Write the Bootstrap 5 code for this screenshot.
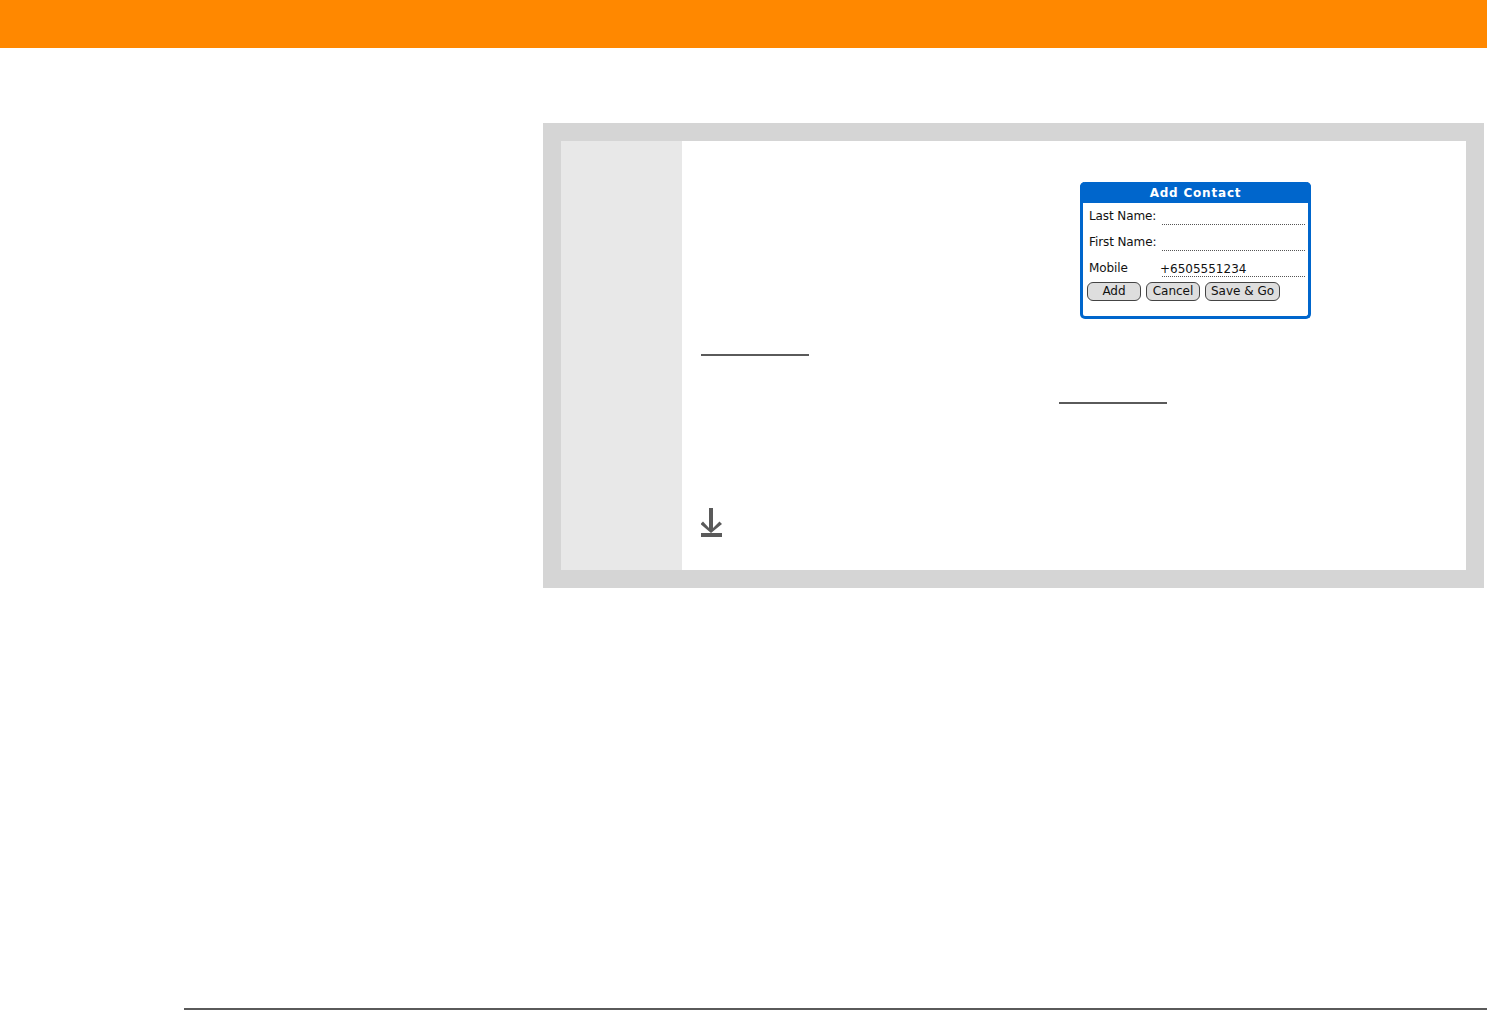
<!DOCTYPE html>
<html lang="en">
<head>
  <meta charset="UTF-8" />
  <meta name="viewport" content="width=device-width, initial-scale=1.0" />
  <title>Add Contact</title>
  <link href="https://cdn.jsdelivr.net/npm/bootstrap@5.3.2/dist/css/bootstrap.min.css" rel="stylesheet">
  <style>
    body { background: #fff; overflow: hidden; }
    .top-band { height: 48px; background: #ff8800; }
    .step-panel { margin: 75px 3px 0 543px; height: 465px; border: 18px solid #d5d5d5; }
    .step-side { width: 121px; background: #e8e8e8; }
    .step-body { padding: 41px 0 0 19px; }
    .blank-link { width: 108px; height: 2px; background: #5a5a5a; }
    .link-one { margin-top: 35px; }
    .link-two { margin: 46px 0 0 358px; }
    .note-icon { display: block; width: 21px; height: 30px; margin-top: 104px; }

    /* handheld dialog */
    .palm-screen {
      width: 231px; height: 137px; margin-left: 379px;
      background: #fff; border: 3px solid #0066cc; border-top: 0; border-radius: 5px;
      font: 12px/14px "DejaVu Sans", sans-serif; color: #111;
    }
    .palm-title {
      height: 21px; margin: 0 -3px; background: #0066cc; border-radius: 5px 5px 0 0;
      color: #fff; font-weight: 700; line-height: 22px; letter-spacing: .8px; text-align: center;
    }
    .palm-row { height: 26px; padding-left: 6px; }
    .palm-row:first-of-type { margin-top: 2px; }
    .palm-label { width: 73px; padding-top: 6px; white-space: nowrap; letter-spacing: -.1px; }
    .palm-field { width: 143px; height: 21px; border-bottom: 1px dotted #555; padding: 6px 0 0 0; margin-top: 1px; white-space: nowrap; }
    .palm-value { margin-left: -2px; }
    .palm-btns { gap: 5px; padding: 1px 0 0 4px; }
    .palm-btn {
      height: 19px; border: 1px solid #444; border-radius: 6px; background: #dedede;
      color: #111; text-align: center; line-height: 17px;
    }
    .btn-add, .btn-cancel { width: 54px; }
    .btn-save { width: 75px; }

    .page-rule { margin: 420px 0 0 184px; height: 2px; background: #5a5a5a; }
  </style>
  <script src="https://cdn.jsdelivr.net/npm/bootstrap@5.3.2/dist/js/bootstrap.bundle.min.js"></script>
</head>
<body>
  <div class="top-band"></div>

  <div class="step-panel d-flex">
    <div class="step-side"></div>
    <div class="step-body flex-grow-1">
      <div class="palm-screen">
        <div class="palm-title">Add Contact</div>
        <div class="palm-row d-flex">
          <div class="palm-label">Last Name:</div>
          <div class="palm-field"></div>
        </div>
        <div class="palm-row d-flex">
          <div class="palm-label">First Name:</div>
          <div class="palm-field"></div>
        </div>
        <div class="palm-row d-flex">
          <div class="palm-label">Mobile</div>
          <div class="palm-field"><span class="palm-value">+6505551234</span></div>
        </div>
        <div class="palm-btns d-flex">
          <div class="palm-btn btn-add">Add</div>
          <div class="palm-btn btn-cancel">Cancel</div>
          <div class="palm-btn btn-save">Save &amp; Go</div>
        </div>
      </div>

      <div class="blank-link link-one"></div>
      <div class="blank-link link-two"></div>

      <svg class="note-icon" viewBox="0 0 21 30" aria-hidden="true">
        <path d="M8 0h4v20l6.500-6.500 2.500 2.500-11 9-10.500-9 2.500-2.500L8 20z" fill="#5a5a5a"/>
        <rect x="0" y="25" width="21" height="4" fill="#5a5a5a"/>
      </svg>
    </div>
  </div>

  <div class="page-rule"></div>
</body>
</html>
